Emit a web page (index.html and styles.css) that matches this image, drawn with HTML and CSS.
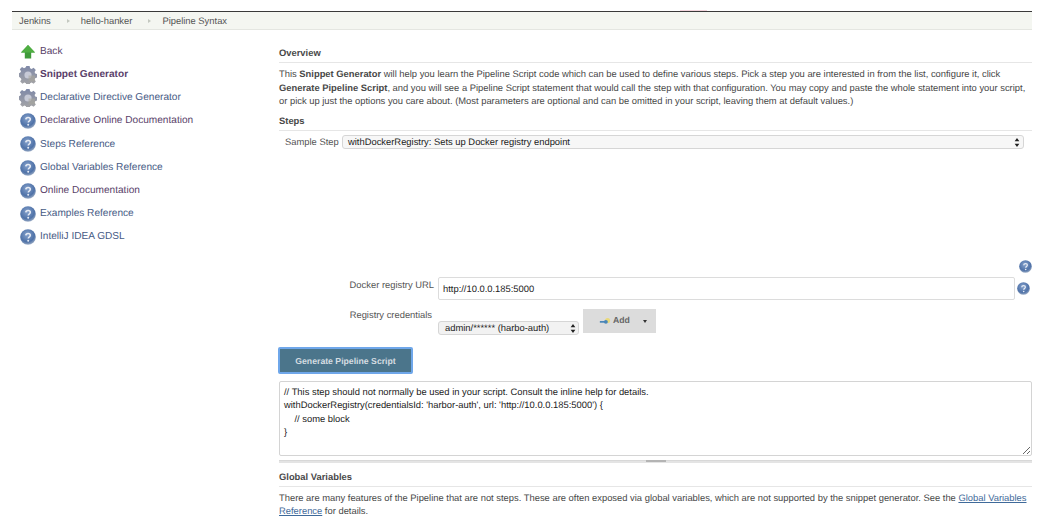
FILE: index.html
```html
<!DOCTYPE html>
<html lang="en">
<head>
<meta charset="utf-8">
<title>Pipeline Syntax</title>
<link rel="stylesheet" href="styles.css">
</head>
<body>
<svg class="defs" width="0" height="0" aria-hidden="true">
  <defs>
    <radialGradient id="helpG" cx="45%" cy="35%" r="70%">
      <stop offset="0" stop-color="#86a2cc"/>
      <stop offset="0.66" stop-color="#4f72a8"/>
      <stop offset="0.85" stop-color="#8299bb"/>
      <stop offset="1" stop-color="#bcc7d7"/>
    </radialGradient>
    <linearGradient id="gearG" x1="0" y1="0" x2="0" y2="1">
      <stop offset="0" stop-color="#7f89a8"/>
      <stop offset="1" stop-color="#a5a5a6"/>
    </linearGradient>
    <symbol id="help" viewBox="0 0 16 16">
      <circle cx="8" cy="8" r="7.8" fill="url(#helpG)"/>
      <path d="M5.8 6.4C5.9 5.1 6.8 4.5 8.1 4.5c1.4 0 2.2.8 2.2 1.8 0 .9-.6 1.4-1.2 1.9-.6.4-.8.7-.8 1.3" fill="none" stroke="#e6ebf4" stroke-width="1.6"/>
      <circle cx="8.2" cy="11.7" r="1" fill="#e6ebf4"/>
    </symbol>
    <symbol id="gear" viewBox="0 0 18 18">
      <path d="M7.4 0h3.2l.5 2.3 1.5.7 2-1.2 2.2 2.2-1.2 2 .6 1.4 1.8.6v3.6l-1.8.6-.6 1.4 1.2 2-2.2 2.2-2-1.2-1.5.7-.5 2.2H7.4l-.5-2.2-1.5-.7-2 1.2-2.2-2.2 1.2-2-.6-1.4L0 10.8V7.2l1.4-.6.6-1.4-1.2-2L3 1l2 1.2 1.5-.7z" fill="url(#gearG)"/>
      <circle cx="9" cy="9" r="3.6" fill="#c6c9d6"/>
      <path d="M9.5 9.5h6.5v6H9.5z" fill="#a8a69c" opacity=".6"/>
    </symbol>
    <symbol id="updown" viewBox="0 0 6 10">
      <path d="M3 0l2.6 3.6H.4zM3 10L.4 6.4h5.2z" fill="#222"/>
    </symbol>
  </defs>
</svg>

<div class="top-edge"><span class="top-mark"></span></div>
<nav class="breadcrumbs">
  <a class="crumb" href="#">Jenkins</a><span class="sep"></span>
  <a class="crumb" href="#">hello-hanker</a><span class="sep"></span>
  <a class="crumb" href="#">Pipeline Syntax</a>
</nav>

<div class="page">
  <aside class="side">
    <a class="task visited" href="#">
      <svg class="ti" viewBox="0 0 18 18"><path d="M9 2L16 9.5H12.2V15.5H5.8V9.5H2z" fill="#3f9a3a"/><path d="M9 2L16 9.5H2z" fill="#4fae42"/></svg>
      <span>Back</span></a>
    <a class="task visited current" href="#"><svg class="ti"><use href="#gear"/></svg><span>Snippet Generator</span></a>
    <a class="task" href="#"><svg class="ti"><use href="#gear"/></svg><span>Declarative Directive Generator</span></a>
    <a class="task visited" href="#"><svg class="ti h"><use href="#help"/></svg><span>Declarative Online Documentation</span></a>
    <a class="task" href="#"><svg class="ti h"><use href="#help"/></svg><span>Steps Reference</span></a>
    <a class="task" href="#"><svg class="ti h"><use href="#help"/></svg><span>Global Variables Reference</span></a>
    <a class="task visited" href="#"><svg class="ti h"><use href="#help"/></svg><span>Online Documentation</span></a>
    <a class="task" href="#"><svg class="ti h"><use href="#help"/></svg><span>Examples Reference</span></a>
    <a class="task" href="#"><svg class="ti h"><use href="#help"/></svg><span>IntelliJ IDEA GDSL</span></a>
  </aside>

  <main class="main">
    <h2 class="section first">Overview</h2>
    <p class="para">This <b>Snippet Generator</b> will help you learn the Pipeline Script code which can be used to define various steps. Pick a step you are interested in from the list, configure it, click <b>Generate Pipeline Script</b>, and you will see a Pipeline Script statement that would call the step with that configuration. You may copy and paste the whole statement into your script, or pick up just the options you care about. (Most parameters are optional and can be omitted in your script, leaving them at default values.)</p>
    <h2 class="section steps">Steps</h2>
    <div class="sample">
      <label class="sample-label">Sample Step</label>
      <div class="fake-select wide"><span>withDockerRegistry: Sets up Docker registry endpoint</span><svg class="ud"><use href="#updown"/></svg></div>
    </div>

    <div class="help-row"><svg class="hi"><use href="#help"/></svg></div>
    <div class="form-row url-row">
      <label class="flabel">Docker registry URL</label>
      <div class="text-input">http://10.0.0.185:5000</div>
      <svg class="hi"><use href="#help"/></svg>
    </div>
    <div class="form-row cred-row">
      <label class="flabel">Registry credentials</label>
      <div class="fake-select cred"><span>admin/****** (harbo-auth)</span><svg class="ud"><use href="#updown"/></svg></div>
      <div class="add-btn">
        <svg class="key" viewBox="0 0 14 8"><circle cx="10" cy="3.4" r="3" fill="#e9d97a"/><path d="M1 4h6v2H1z" fill="#4a86b8"/><circle cx="8" cy="5" r="2.3" fill="#4a86b8"/></svg>
        <span>Add</span><span class="caret"></span>
      </div>
    </div>

    <button class="generate" type="button">Generate Pipeline Script</button>

    <textarea class="output" readonly spellcheck="false">// This step should not normally be used in your script. Consult the inline help for details.
withDockerRegistry(credentialsId: 'harbor-auth', url: 'http://10.0.0.185:5000') {
    // some block
}</textarea>
    <div class="grip"><span></span></div>

    <h2 class="section globals">Global Variables</h2>
    <p class="para">There are many features of the Pipeline that are not steps. These are often exposed via global variables, which are not supported by the snippet generator. See the <a class="link" href="#">Global Variables Reference</a> for details.</p>
  </main>
</div>
</body>
</html>
```

FILE: styles.css
```css
* { box-sizing: border-box; text-rendering: geometricPrecision; }
html, body { margin: 0; padding: 0; height: 529px; overflow: hidden; background: #fff; }
body { font-family: "Liberation Sans", Arial, sans-serif; font-size: 9.4px; color: #484848; line-height: 13.5px; }
.defs { display: block; height: 0; }
.top-edge { height: 11px; display: flex; align-items: flex-end; padding-left: 680px; }
.top-mark { width: 27px; height: 1px; background: #f3d6de; }
.breadcrumbs { margin: 0 19px 0 12px; height: 19px; display: flex; align-items: center; background: #f4f6f1; border-top: 1px solid #3a3a3a; border-bottom: 1px solid #e4e6e1; padding-left: 7px; color: #555; }
.crumb { color: #555; text-decoration: none; }
.sep { width: 0; height: 0; margin: 0 11px 0 16px; border-left: 3px solid #c4c8c0; border-top: 2.5px solid transparent; border-bottom: 2.5px solid transparent; }
.page { display: flex; }
.side { width: 279px; padding: 10px 0 0 19px; flex: none; }
.task { display: flex; align-items: center; height: 23.2px; font-size: 10.1px; color: #475b85; text-decoration: none; white-space: nowrap; }
.task.visited { color: #5a3f6a; }
.task.current { font-weight: bold; }
.ti { width: 18px; height: 18px; margin-right: 3px; flex: none; }
.ti.h { width: 16px; height: 16px; margin: 0 4px 0 1px; }
.main { width: 753px; flex: none; }
.section { margin: 0; font-size: 9.4px; font-weight: bold; color: #484848; line-height: 13px; border-bottom: 1px solid #e6e6e6; padding-bottom: 3px; }
.section.first { margin-top: 16px; }
.para { margin: 4px 0 0; }
.section.steps { margin-top: 6px; }
.sample { display: flex; align-items: center; margin-top: 4.5px; padding-left: 6px; }
.sample-label { width: 57px; color: #555; flex: none; white-space: nowrap; }
.fake-select { display: flex; align-items: center; justify-content: space-between; border: 1px solid #d6d6d6; border-radius: 3px; background: #f7f7f7; color: #222; height: 14px; padding: 0 3px 0 5px; white-space: nowrap; }
.fake-select.wide { flex: none; width: 682px; }
.ud { width: 6px; height: 9px; flex: none; }
.help-row { display: flex; justify-content: flex-end; margin-top: 110.5px; }
.hi { width: 13px; height: 13px; flex: none; }
.form-row { display: flex; }
.url-row { align-items: center; height: 23px; margin-top: 4.5px; }
.flabel { width: 155px; text-align: right; color: #555; flex: none; margin-right: 4px; }
.url-row .flabel { position: relative; top: -4px; }
.text-input { width: 577px; height: 23px; border: 1px solid #dcdcdc; border-radius: 2px; padding: 0 4px; display: flex; align-items: center; color: #222; background: #fff; }
.url-row .hi { margin-left: 2px; }
.cred-row { margin-top: 9px; height: 24px; align-items: flex-start; }
.cred-row .flabel { margin-top: -1px; padding-right: 2px; }
.fake-select.cred { width: 141px; margin-top: 12px; padding: 0 2px 0 6px; background: #f2f2f2; }
.add-btn { width: 73px; height: 24px; margin-left: 4px; background: #dcdcdc; display: flex; align-items: center; padding-left: 16px; font-weight: bold; color: #666; font-size: 8.7px; }
.key { width: 12px; height: 8px; margin-right: 2px; }
.caret { width: 0; height: 0; margin-left: 13px; border-top: 3px solid #333; border-left: 2.5px solid transparent; border-right: 2.5px solid transparent; }
.generate { display: block; margin: 14px 0 0 -1px; width: 135px; height: 27px; background: #4b758b; border: 2px solid #6fa7ea; border-radius: 2px; color: #d5dde2; font: bold 8.7px "Liberation Sans", Arial, sans-serif; padding: 0; }
.output { display: block; width: 753px; height: 75px; margin-top: 7px; padding: 3px 4px; border: 1px solid #d4d4d4; border-radius: 2px; font: 9.4px/13.3px "Liberation Sans", Arial, sans-serif; color: #222; overflow: hidden; outline: none; resize: vertical; }
.grip { height: 3px; background: #e4e4e4; margin-top: 4px; display: flex; justify-content: center; border-top: 1px solid #d8d8d8; }
.grip span { width: 20px; height: 2px; background: #b4b4b4; margin-top: -1px; }
.section.globals { margin-top: 6.5px; }
.link { color: #3f6a9a; text-decoration: underline; }
```
